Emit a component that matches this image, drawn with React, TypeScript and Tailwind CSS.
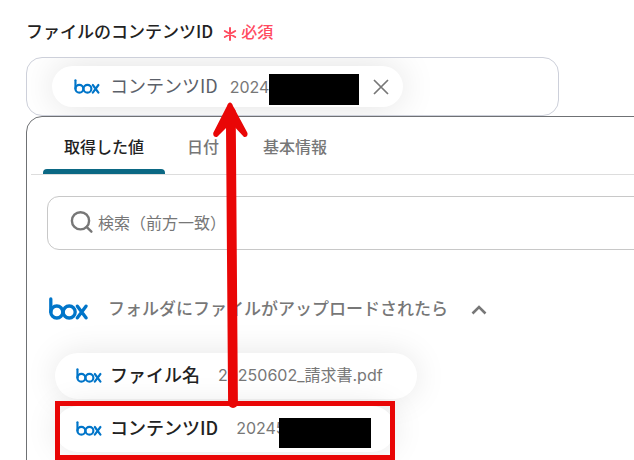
import { useState } from "react";

function BoxLogo({ className }: { className: string }) {
  return (
    <svg viewBox="0 0 39 23" className={className} fill="none" stroke="#0075c9" strokeWidth="3.3" strokeLinecap="round" strokeLinejoin="round" role="img" aria-label="box">
      <path d="M1.8 2v13" />
      <circle cx="7.8" cy="15" r="6" />
      <circle cx="20.2" cy="15" r="6" />
      <path d="M28.4 9.2l8.6 11.6M37 9.2l-8.6 11.6" />
    </svg>
  );
}

const tabs = ["取得した値", "日付", "基本情報"];

export default function App() {
  const [active, setActive] = useState(tabs[0]);
  return (
    <main className="relative h-screen overflow-hidden bg-white pl-[26px] pt-5 font-['Inter','Noto_Sans_CJK_JP',sans-serif] text-[#777777]">
      <div className="flex h-6 items-center">
        <h1 className="pb-0.5 font-['Noto_Sans_CJK_JP',sans-serif] text-[17px] font-medium leading-6 text-[#222222]">ファイルのコンテンツID</h1>
        <span className="ml-2.5 flex items-center gap-1 text-base font-medium leading-6 text-[#ff4b5f]">
          <svg viewBox="0 0 14 14" className="mt-1 size-3.5" fill="none" stroke="currentColor" strokeWidth="2" strokeLinecap="round" aria-hidden="true">
            <path d="M7 1v12M1.8 4l10.4 6M12.2 4L1.8 10" />
          </svg>
          必須
        </span>
      </div>

      <div className="mr-[75px] mt-[13px] flex h-[59px] items-center overflow-hidden rounded-2xl border border-[#cdd0da] pl-[25px]">
        <div className="flex h-[41px] items-center rounded-full bg-white pl-[22px] pr-3.5 shadow-[0_0_36px_rgba(0,0,0,0.12)]">
          <BoxLogo className="h-[15px] w-[26px]" />
          <span className="ml-2.5 pb-1 font-['Noto_Sans_CJK_JP',sans-serif] text-lg leading-6 text-[#5b6069]">コンテンツID</span>
          <span className="ml-3 text-base leading-6">2024</span>
          <span className="mt-1.5 h-[31px] w-[90px] bg-black" />
          <button type="button" aria-label="クリア" className="ml-3.5">
            <svg viewBox="0 0 16 16" className="size-4" fill="none" stroke="currentColor" strokeWidth="1.7" aria-hidden="true">
              <path d="M1 1l14 14M15 1L1 15" />
            </svg>
          </button>
        </div>
      </div>

      <section className="-mr-6 rounded-tl-2xl border border-[#6f7174] pb-8">
        <div role="tablist" className="ml-1 flex h-[58px] border-b border-[#dddddd] pl-3">
          {tabs.map((tab) => (
            <button
              key={tab}
              type="button"
              role="tab"
              aria-selected={active === tab}
              onClick={() => setActive(tab)}
              className={
                active === tab
                  ? "relative px-[21px] pt-0.5 text-base font-medium text-[#222222] after:absolute after:inset-x-0 after:bottom-0 after:h-[5px] after:rounded-t after:bg-[#0b6884]"
                  : "relative px-[22px] pt-0.5 text-base font-medium"
              }
            >
              {tab}
            </button>
          ))}
        </div>

        <label className="ml-5 mt-[21px] flex h-[54px] items-center rounded-xl border border-[#c8c8c8] pl-[22px]">
          <svg viewBox="0 0 24 24" className="size-6" fill="none" stroke="currentColor" strokeWidth="2.4" strokeLinecap="round" aria-hidden="true">
            <circle cx="10.500" cy="9.8" r="8.6" />
            <path d="M16.8 16.1l4.6 4.600" />
          </svg>
          <input type="text" aria-label="検索" placeholder="検索（前方一致）" className="ml-1 min-w-0 flex-1 text-base outline-none placeholder:text-[#777777]" />
        </label>

        <button type="button" className="ml-[22px] mt-[44px] flex h-7 items-center">
          <BoxLogo className="h-[23px] w-[39px]" />
          <span className="ml-5 font-['Noto_Sans_CJK_JP',sans-serif] text-[17px] font-medium leading-7">フォルダにファイルがアップロードされたら</span>
          <svg viewBox="0 0 16 12" className="ml-[23px] mt-1 h-3 w-4" fill="none" stroke="currentColor" strokeWidth="2.6" aria-hidden="true">
            <path d="M1.5 9.5L8 3l6.5 6.5" />
          </svg>
        </button>

        <div className="ml-7 mt-[31px] flex flex-col items-start gap-[7px]">
          <button type="button" className="flex h-[46px] items-center rounded-full bg-white pb-0.5 pl-[21px] pr-[34px] shadow-[0_0_32px_rgba(0,0,0,0.10)]">
            <BoxLogo className="h-[15px] w-[26px]" />
            <span className="ml-2 pb-0.5 font-['Noto_Sans_CJK_JP',sans-serif] text-lg font-medium leading-6 text-[#222222]">ファイル名</span>
            <span className="ml-[18px] text-base leading-6">20250602_請求書.pdf</span>
          </button>
          <button type="button" className="relative flex h-[46px] items-center rounded-full bg-white pb-0.5 pl-[21px] pr-6 shadow-[0_0_32px_rgba(0,0,0,0.10)]">
            <BoxLogo className="h-[15px] w-[26px]" />
            <span className="ml-2 pb-0.5 font-['Noto_Sans_CJK_JP',sans-serif] text-lg font-medium leading-6 text-[#222222]">コンテンツID</span>
            <span className="ml-[18px] text-base leading-6">20245</span>
            <span className="z-10 -ml-[7px] mt-2.5 h-[30px] w-[92px] bg-black" />
            <span className="absolute -bottom-2 -top-[5px] inset-x-0 border-[5px] border-[#e90606]" />
          </button>
        </div>
      </section>

      <svg viewBox="0 0 40 310" className="pointer-events-none absolute left-[210px] top-[100px] h-[310px] w-10" fill="none" stroke="#e90606" aria-hidden="true">
        <path d="M20.8 12L23 303" strokeWidth="9.8" strokeLinecap="round" />
        <path d="M20 2.500Q18 2.500 17 6L3.200 33Q3 37.500 7 37L21 23L34 37Q38 37.500 37.500 33L23 6Q22 2.500 20 2.500Z" fill="#e90606" stroke="none" />
      </svg>
    </main>
  );
}
